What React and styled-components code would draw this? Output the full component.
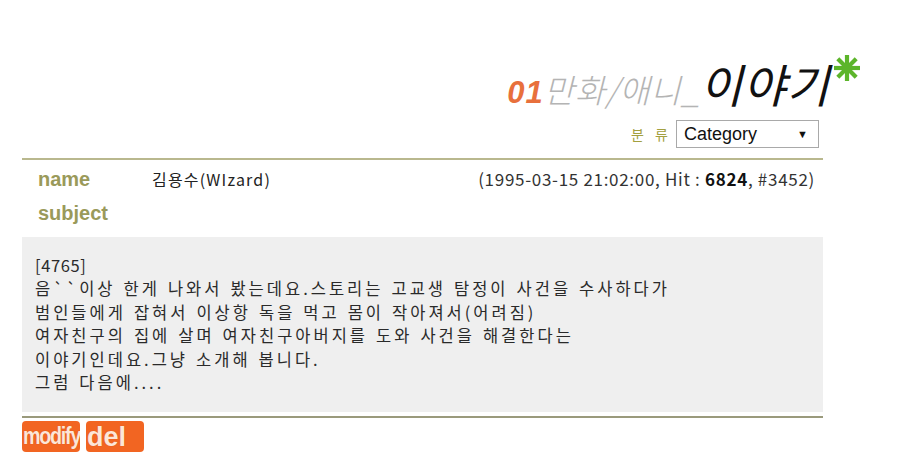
import React from 'react'
import styled, { createGlobalStyle } from 'styled-components'

const GlobalStyle = createGlobalStyle`
  html, body {
    margin: 0;
    padding: 0;
    background: #fff;
    font-family: "Liberation Sans", "Noto Sans CJK KR", sans-serif;
  }
`

const Page = styled.div`
  width: 801px;
  margin-left: 22px;
  padding-top: 50px;
`

const TitleRow = styled.div`
  display: flex;
  justify-content: flex-end;
  align-items: flex-end;
  height: 60px;
`

const Title = styled.h1`
  margin: 0 0 -6px 0;
  font-weight: normal;
  font-family: "Noto Sans CJK KR", sans-serif;
  display: flex;
  align-items: baseline;
  white-space: nowrap;
  position: relative;
  right: -7px;
`

const Num = styled.span`
  color: #e8703c;
  font-style: italic;
  font-weight: bold;
  font-family: "Liberation Sans", sans-serif;
  font-size: 31px;
  letter-spacing: 1px;
`

const Board = styled.span`
  color: #b4b4b4;
  font-style: italic;
  font-size: 33px;
  font-weight: 300;
  letter-spacing: 0.6px;
`

const Story = styled.span`
  color: #111;
  font-size: 46px;
  font-style: italic;
  font-weight: 400;
  letter-spacing: 1px;
`

const Star = styled.svg`
  position: absolute;
  right: -31px;
  top: 4px;
`

const FilterRow = styled.div`
  display: flex;
  justify-content: flex-end;
  align-items: center;
  gap: 4px;
  margin-top: 10px;
  padding-right: 4px;
`

const FilterLabel = styled.span`
  color: #a3a040;
  font-family: "Noto Sans CJK KR", sans-serif;
  font-size: 14px;
  letter-spacing: 4px;
`

const Select = styled.div`
  box-sizing: border-box;
  width: 143px;
  height: 28px;
  border: 1px solid #a9a9a9;
  display: flex;
  align-items: center;
  justify-content: space-between;
  padding-left: 7px;
  font-size: 18px;
  color: #111;
`

const Arrow = styled.span`
  font-size: 11px;
  margin-right: 10px;
`

const TopRule = styled.div`
  margin-top: 10px;
  border-top: 2px solid #b9b88e;
`

const MetaRow = styled.div`
  display: flex;
  align-items: baseline;
  padding: 6px 8px 0 16px;
  height: 30px;
`

const Label = styled.span`
  width: 114px;
  color: #9a9a5a;
  font-weight: bold;
  font-size: 20px;
`

const Author = styled.span`
  font-family: "Noto Sans CJK KR", sans-serif;
  font-size: 16px;
  color: #222;
  letter-spacing: 1.2px;
`

const Info = styled.span`
  margin-left: auto;
  font-family: "Noto Sans CJK KR", sans-serif;
  font-size: 17px;
  color: #333;
  letter-spacing: 0.7px;

  b {
    color: #111;
  }
`

const Body = styled.div`
  margin-top: 5px;
  background: #efefef;
  height: 175px;
  box-sizing: border-box;
  padding: 17px 13px 0;
  font-family: "Noto Sans CJK KR", sans-serif;
  font-size: 16.5px;
  line-height: 23.4px;
  color: #2a2a2a;
  letter-spacing: 3px;
  word-spacing: 1.3px;
`

const Tag = styled.span`
  letter-spacing: 0.6px;
`

const BottomRule = styled.div`
  margin-top: 4px;
  border-top: 2px solid #9a9a7c;
`

const Buttons = styled.div`
  display: flex;
  gap: 6px;
  margin-top: 3px;
`

const Btn = styled.button`
  box-sizing: border-box;
  height: 31px;
  width: 58px;
  border: none;
  border-radius: 4px;
  background: #f26522;
  padding: 3px 0 0 1px;
  display: flex;
  align-items: flex-start;
  justify-content: flex-start;
  overflow: hidden;
`

const BtnText = styled.span`
  display: inline-block;
  color: #fde6d8;
  font-family: "Liberation Sans", sans-serif;
  font-weight: bold;
  font-size: ${p => p.fs}px;
  letter-spacing: ${p => p.ls}px;
  line-height: 1;
  transform: scaleX(${p => p.sx});
  transform-origin: left top;
  text-shadow: 0 0 1px #c9501a;
`

export default function App() {
  return (
    <>
      <GlobalStyle />
      <Page>
        <TitleRow>
          <Title>
            <Num>01</Num>
            <Board>만화/애니_</Board>
            <Story>이야기</Story>
            <Star width="28" height="28" viewBox="0 0 28 28">
              <g stroke="#5cb52a" strokeWidth="4.2" strokeLinecap="butt">
                <line x1="14" y1="1" x2="14" y2="27" />
                <line x1="1" y1="14" x2="27" y2="14" />
                <line x1="4.8" y1="4.8" x2="23.2" y2="23.2" />
                <line x1="23.2" y1="4.8" x2="4.8" y2="23.2" />
              </g>
            </Star>
          </Title>
        </TitleRow>
        <FilterRow>
          <FilterLabel>분 류</FilterLabel>
          <Select>
            Category
            <Arrow>▼</Arrow>
          </Select>
        </FilterRow>
        <TopRule />
        <MetaRow>
          <Label>name</Label>
          <Author>김용수(WIzard)</Author>
          <Info>
            (1995-03-15 21:02:00, Hit : <b>6824</b>, #3452)
          </Info>
        </MetaRow>
        <MetaRow>
          <Label>subject</Label>
        </MetaRow>
        <Body>
          <Tag>[4765]</Tag><br />
          음``이상 한게 나와서 봤는데요.스토리는 고교생 탐정이 사건을 수사하다가<br />
          범인들에게 잡혀서 이상항 독을 먹고 몸이 작아져서(어려짐)<br />
          여자친구의 집에 살며 여자친구아버지를 도와 사건을 해결한다는<br />
          이야기인데요.그냥 소개해 봅니다.<br />
          그럼 다음에....
        </Body>
        <BottomRule />
        <Buttons>
          <Btn>
            <BtnText fs={24} ls={-1.5} sx={0.82}>modify</BtnText>
          </Btn>
          <Btn>
            <BtnText fs={27} ls={0} sx={1}>del</BtnText>
          </Btn>
        </Buttons>
      </Page>
    </>
  )
}
